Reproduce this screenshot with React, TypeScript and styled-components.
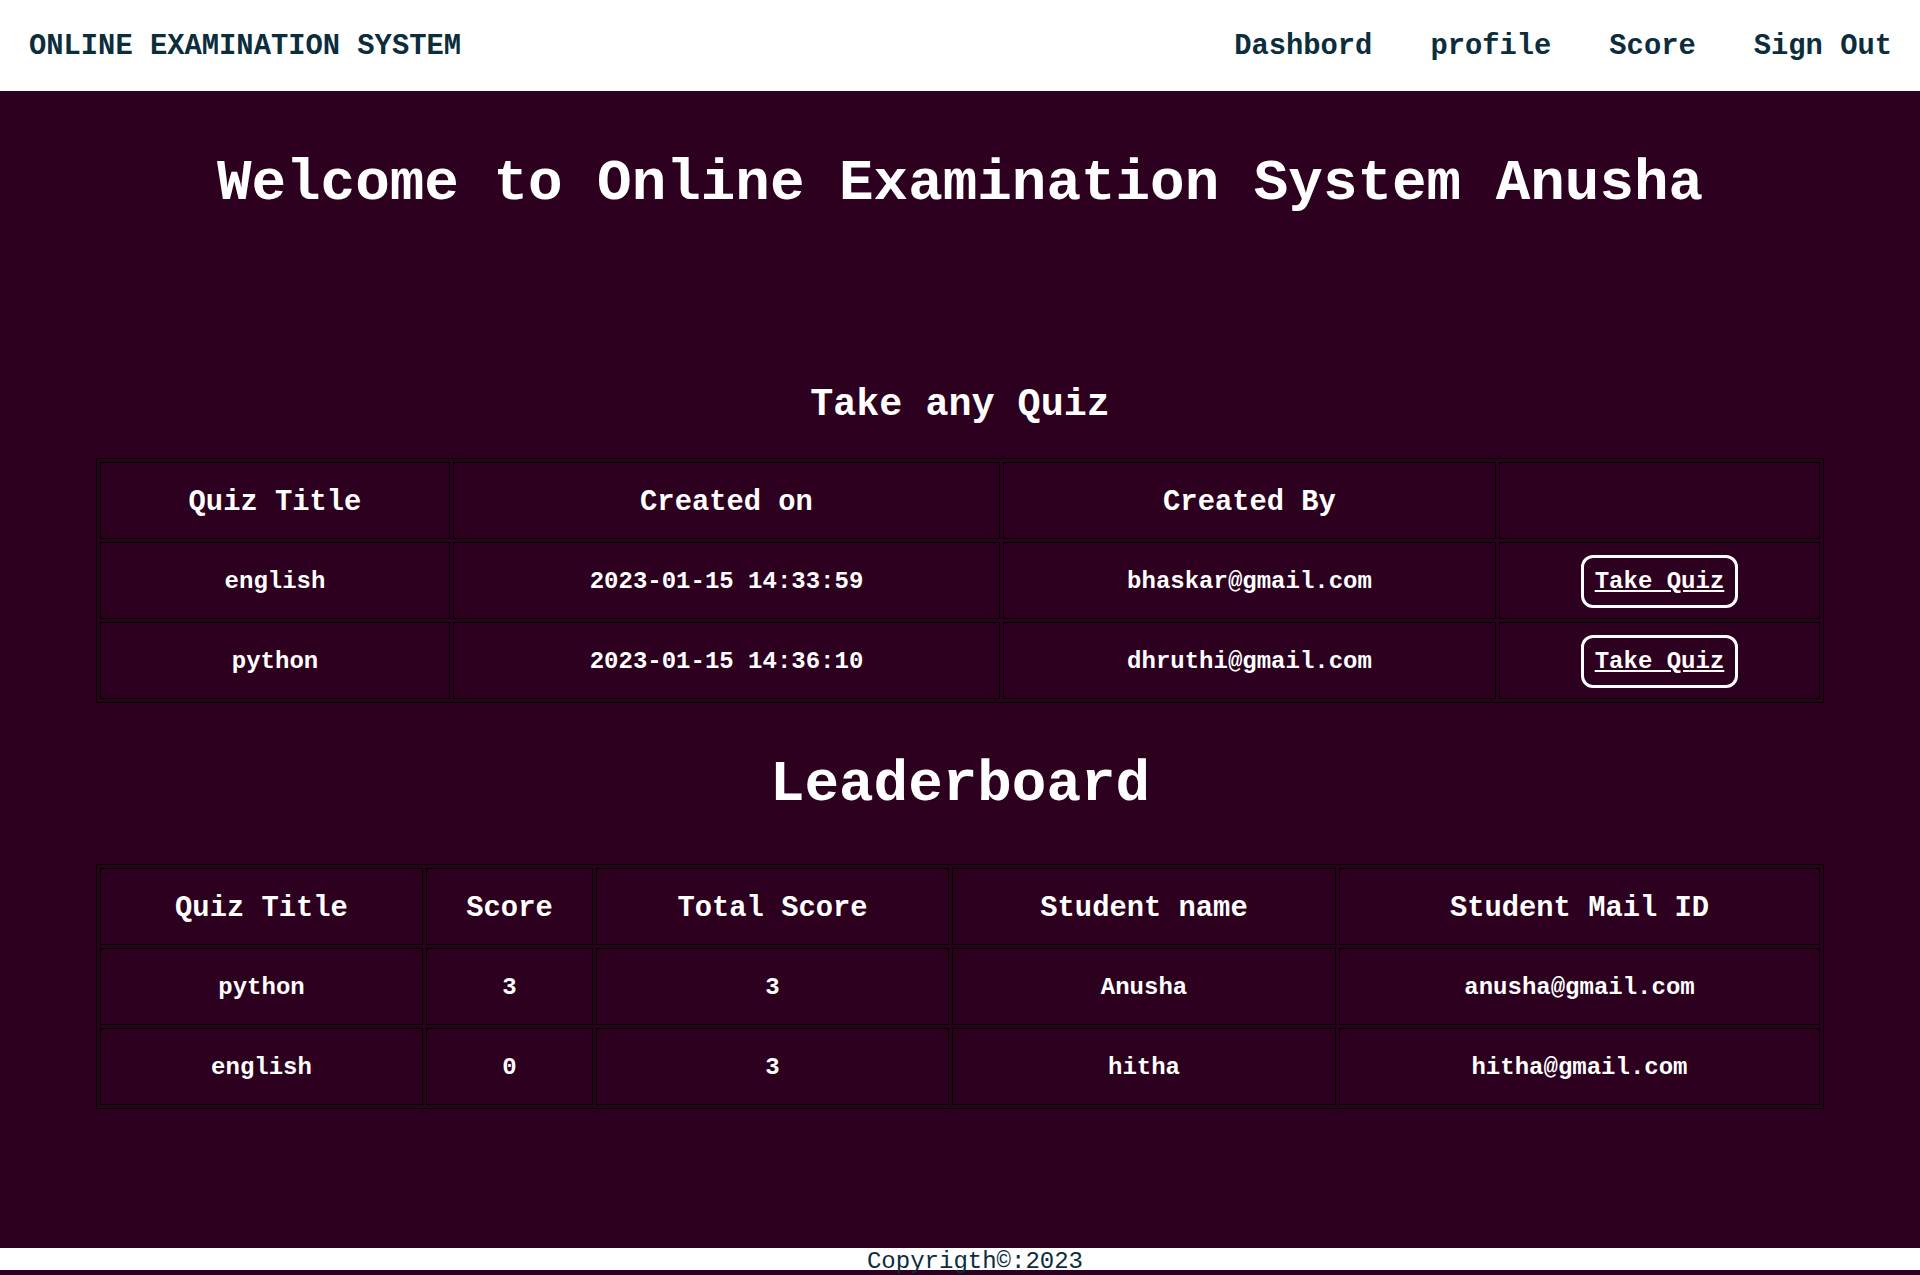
import styled, { createGlobalStyle } from 'styled-components';

const GlobalStyle = createGlobalStyle`
  html, body {
    margin: 0;
    padding: 0;
  }

  body {
    background: #2c001e;
    font-family: "Liberation Mono", "Courier New", monospace;
    font-size: 24px;
  }
`;

const quizzes = [
  { title: 'english', created: '2023-01-15 14:33:59', by: 'bhaskar@gmail.com' },
  { title: 'python', created: '2023-01-15 14:36:10', by: 'dhruthi@gmail.com' },
];

const scores = [
  { title: 'python', score: 3, total: 3, name: 'Anusha', mail: 'anusha@gmail.com' },
  { title: 'english', score: 0, total: 3, name: 'hitha', mail: 'hitha@gmail.com' },
];

const quizCols = [350, 547, 493, 321];
const boardCols = [323, 167, 353, 384, 481];

function App() {
  return (
    <Page>
      <GlobalStyle />
      <TopBar>
        <Brand>ONLINE EXAMINATION SYSTEM</Brand>
        <Nav>
          <NavLink href="#">Dashbord</NavLink>
          <NavLink href="#">profile</NavLink>
          <NavLink href="#">Score</NavLink>
          <NavLink href="#">Sign Out</NavLink>
        </Nav>
      </TopBar>

      <Main>
        <Welcome>Welcome to Online Examination System Anusha</Welcome>

        <SubTitle>Take any Quiz</SubTitle>
        <Table $gap={31}>
          <colgroup>
            {quizCols.map((w, i) => (
              <col key={i} style={{ width: w }} />
            ))}
          </colgroup>
          <thead>
            <tr>
              <Th>Quiz Title</Th>
              <Th>Created on</Th>
              <Th>Created By</Th>
              <Th></Th>
            </tr>
          </thead>
          <tbody>
            {quizzes.map((q) => (
              <tr key={q.title}>
                <Td>{q.title}</Td>
                <Td>{q.created}</Td>
                <Td>{q.by}</Td>
                <Td>
                  <QuizButton href="#">Take Quiz</QuizButton>
                </Td>
              </tr>
            ))}
          </tbody>
        </Table>

        <BoardTitle>Leaderboard</BoardTitle>
        <Table $gap={47}>
          <colgroup>
            {boardCols.map((w, i) => (
              <col key={i} style={{ width: w }} />
            ))}
          </colgroup>
          <thead>
            <tr>
              <Th>Quiz Title</Th>
              <Th>Score</Th>
              <Th>Total Score</Th>
              <Th>Student name</Th>
              <Th>Student Mail ID</Th>
            </tr>
          </thead>
          <tbody>
            {scores.map((s) => (
              <tr key={s.title}>
                <Td>{s.title}</Td>
                <Td>{s.score}</Td>
                <Td>{s.total}</Td>
                <Td>{s.name}</Td>
                <Td>{s.mail}</Td>
              </tr>
            ))}
          </tbody>
        </Table>
      </Main>

      <Footer>Copyrigth©:2023</Footer>
    </Page>
  );
}

export default App;

const Page = styled.div`
  min-height: 1275px;
  display: flex;
  flex-direction: column;
`;

const TopBar = styled.header`
  height: 91px;
  background: #ffffff;
  display: flex;
  justify-content: space-between;
  align-items: center;
  padding: 2px 28px 0 29px;
  box-sizing: border-box;
`;

const Brand = styled.div`
  font-size: 28.8px;
  font-weight: bold;
  color: #0b2d3c;
`;

const Nav = styled.nav`
  display: flex;
  gap: 58px;
`;

const NavLink = styled.a`
  font-size: 28.8px;
  font-weight: bold;
  color: #0b2d3c;
  text-decoration: none;
`;

const Main = styled.main`
  flex: 1;
  color: #ffffff;
  text-align: center;
`;

const Welcome = styled.h1`
  margin: 60px 0 0;
  font-size: 57.6px;
  line-height: 65px;
  font-weight: bold;
`;

const SubTitle = styled.h2`
  margin: 168px 0 0;
  font-size: 38.4px;
  line-height: 43px;
  font-weight: bold;
`;

const BoardTitle = styled.h1`
  margin: 49px 0 0;
  font-size: 57.6px;
  line-height: 65px;
  font-weight: bold;
`;

const Table = styled.table<{ $gap: number }>`
  width: 90%;
  margin: ${({ $gap }) => $gap}px auto 0;
  table-layout: fixed;
  border-collapse: separate;
  border-spacing: 3px;
  border: 1px solid #000000;
  color: #ffffff;
`;

const Th = styled.th`
  height: 72px;
  padding: 3px 0 0;
  border: 1px solid #000000;
  font-size: 28.8px;
  font-weight: bold;
  text-align: center;
  vertical-align: middle;
`;

const Td = styled.td`
  height: 73px;
  padding: 2px 0 0;
  border: 1px solid #000000;
  font-size: 24px;
  font-weight: bold;
  text-align: center;
  vertical-align: middle;
`;

const QuizButton = styled.a`
  display: inline-block;
  padding: 10px 11px;
  border: 3px solid #ffffff;
  border-radius: 12px;
  color: #ffffff;
  font-size: 24px;
  font-weight: bold;
  text-decoration: underline;
`;

const Footer = styled.footer`
  height: 22px;
  margin-bottom: 5px;
  padding-left: 30px;
  background: #ffffff;
  color: #0b2d3c;
  font-size: 24px;
  line-height: 28px;
  text-align: center;
  overflow: visible;
`;
